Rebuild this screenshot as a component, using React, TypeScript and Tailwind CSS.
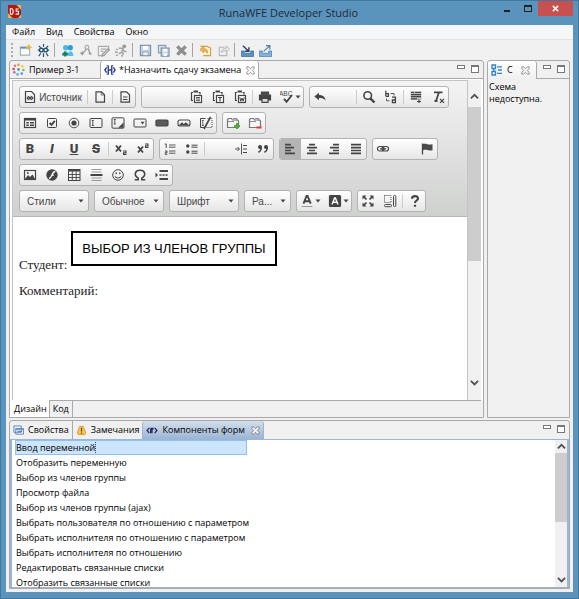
import type { ReactNode } from "react";
import clsx from "clsx";

interface IconProps {
  children: ReactNode;
  className?: string;
}

function Icon({ children, className = "h-[14px] w-[14px]" }: IconProps) {
  return (
    <svg viewBox="0 0 14 14" fill="none" stroke="#444" strokeWidth="1.2" className={clsx("shrink-0", className)} aria-hidden="true">
      {children}
    </svg>
  );
}

const clipboard = (
  <>
    <path d="M4 2.5H2.5v8H4M9.5 2.5H11v2" />
    <path d="M4.5 1.5h4.5" strokeWidth="2" />
    <rect x="5.5" y="5.5" width="7" height="7" fill="#fff" />
  </>
);

const icons: Record<string, ReactNode> = {
  source: (
    <Icon>
      <path d="M2.5 1.5h6l3 3v8h-9z" />
      <path d="M5.8 6.2 4.2 8l1.6 1.8M8.2 6.2 9.8 8 8.2 9.8" />
      <circle cx="7" cy="8" r=".9" />
    </Icon>
  ),
  page: (
    <Icon>
      <path d="M3 1.8h5.5l3 3v7.4H3z" />
      <path d="M8.2 2v3h3" strokeWidth=".7" />
    </Icon>
  ),
  preview: (
    <Icon>
      <path d="M3 1.8h5.5l3 3v7.4H3z" />
      <path d="M5 7h4.5M5 9.5h4.5" />
    </Icon>
  ),
  paste: (
    <Icon>
      {clipboard}
      <path d="M7 7.5h4M7 9h4M7 10.6h4" strokeWidth=".9" />
    </Icon>
  ),
  pasteText: (
    <Icon>
      {clipboard}
      <path d="M7 7.5h4M9 7.5v4" />
    </Icon>
  ),
  pasteWord: (
    <Icon>
      {clipboard}
      <path d="m6.8 7.3 1 4L9 8l1.2 3.3 1-4" strokeWidth="1" />
    </Icon>
  ),
  print: (
    <Icon>
      <path d="M3.5 2.2h7v2h-7z" fill="#444" />
      <path d="M1.5 5h11v5h-11z" fill="#444" />
      <path d="M4 8.5h6v3.8H4z" fill="#ddd" />
    </Icon>
  ),
  spell: (
    <Icon>
      <text x="-1" y="6" fontSize="6.5" fontFamily="Liberation Sans, sans-serif" fill="#444" stroke="none">ABC</text>
      <path d="m4 8.8 2.6 3L12 5" strokeWidth="1.9" />
    </Icon>
  ),
  undo: (
    <Icon>
      <path d="M1.3 6.5 6 2.7v2.400c4 .1 6.200 1.800 6.600 5.600C11 8.500 9.400 8 6 8v2.300z" fill="#444" stroke="none" />
    </Icon>
  ),
  find: (
    <Icon>
      <circle cx="5.700" cy="5.500" r="3.800" strokeWidth="1.600" />
      <path d="m8.300 8.300 4.200 4.200" strokeWidth="2.400" />
    </Icon>
  ),
  replace: (
    <Icon>
      <path d="M1.800.8v5.500M1.800 3.600h2.600v2.700H1.800M8 7.200h3.400v5.500H8.400V10H11" strokeWidth="1.300" />
      <path d="M6.500 3.500H10v2M5.500 10.800H2.500V8.500" strokeWidth=".9" />
    </Icon>
  ),
  selectAll: (
    <Icon>
      <path d="M1.500 1h11v9h-11z" fill="#c0c0c0" stroke="none" />
      <path d="M2 2.500h3M6 2.500h6M2 4.600h10M2 6.700h10M2 8.800h6M8 11.500h4M10 9.500v3.500" />
    </Icon>
  ),
  removeFormat: (
    <Icon>
      <path d="M3 2.300h8.500M8 2.300 5 11M3.500 11h3" strokeWidth="1.800" />
      <path d="m9 8.800 4 4M13 8.800l-4 4" strokeWidth="1.200" />
    </Icon>
  ),
  form: (
    <Icon>
      <rect x="1.500" y="2.500" width="11" height="9" />
      <path d="M1.500 3.500h11" strokeWidth="2.200" />
      <path d="M3.300 6.800h2.500M7 6.800h4M3.300 9.300h2.500M7 9.300h4" strokeWidth="1.400" />
    </Icon>
  ),
  checkbox: (
    <Icon>
      <rect x="2.500" y="2.500" width="9" height="9" rx="1" strokeWidth="1" />
      <path d="m4.600 6.800 1.900 2 3.300-4" strokeWidth="1.900" />
    </Icon>
  ),
  radio: (
    <Icon>
      <circle cx="7" cy="7" r="4.800" strokeWidth=".9" />
      <circle cx="7" cy="7" r="2.600" fill="#444" stroke="none" />
    </Icon>
  ),
  textField: (
    <Icon>
      <rect x="1" y="2.500" width="12" height="9" rx="1" strokeWidth="1" />
      <path d="M2.800 4.500h2M3.800 4.500v5M2.800 9.500h2" strokeWidth=".9" />
    </Icon>
  ),
  textArea: (
    <Icon>
      <rect x="1" y="1.800" width="12" height="10.400" rx="1" strokeWidth="1" />
      <path d="M2.800 3.500h2M3.800 3.500V8M2.800 8h2" strokeWidth=".9" />
      <path d="M12.500 6.500v5.300H7.200z" fill="#444" stroke="none" />
    </Icon>
  ),
  select: (
    <Icon>
      <rect x="1" y="3" width="12" height="8" rx="1" strokeWidth="1" />
      <path d="M7.500 5.800h4L9.500 8.500z" fill="#444" stroke="none" />
    </Icon>
  ),
  button: (
    <Icon>
      <rect x="1" y="4" width="12" height="6" rx="1.200" fill="#5a5a5a" />
    </Icon>
  ),
  imageButton: (
    <Icon>
      <rect x="1" y="4" width="12" height="6" rx="2" strokeWidth="1.100" />
      <path d="m3 9 2-2L6.800 9l2-2L11 9z" fill="#444" />
    </Icon>
  ),
  hidden: (
    <Icon>
      <path d="M6.500 2.500H1.500v9h4" strokeWidth="1" />
      <path d="M2.800 4.500h2M3.800 4.500v5M2.800 9.500h2" strokeWidth=".8" />
      <path d="M8.500 2.500h4.500v9H7" strokeDasharray="1 1" strokeWidth="1" />
      <path d="M11.500 1 5 13" strokeWidth="1.600" />
    </Icon>
  ),
  folderAdd: (
    <Icon>
      <path d="M1.500 11.500v-8l1-1h3l1 1.500h5l1 1v6.500z" fill="#f5f5f5" stroke="#777" />
      <path d="M7 2.500h4v2M2 5.500h6" stroke="#777" strokeWidth=".8" />
      <path d="M8 10h6M11 7v6" stroke="#4fae2f" strokeWidth="2.200" />
    </Icon>
  ),
  folderRemove: (
    <Icon>
      <path d="M1.500 11.500v-8l1-1h3l1 1.500h5l1 1v6.500z" fill="#f5f5f5" stroke="#777" />
      <path d="M7 2.500h4v2M2 5.500h6" stroke="#777" strokeWidth=".8" />
      <path d="M8.500 11.500h5" stroke="#dc3b3b" strokeWidth="2.200" />
    </Icon>
  ),
  sub: (
    <Icon>
      <path d="m2 3.500 5 6M7 3.500l-5 6" strokeWidth="1.900" />
      <path d="M9 9h3v1.700H9.500v1.700h3" strokeWidth="1.100" />
    </Icon>
  ),
  sup: (
    <Icon>
      <path d="m2 4.500 5 6M7 4.500l-5 6" strokeWidth="1.900" />
      <path d="M9 2h3v1.700H9.500v1.700h3" strokeWidth="1.100" />
    </Icon>
  ),
  ordered: (
    <Icon>
      <path d="M1.800 2h1.400v4M2 9h2v1.700H2.300v1.600h2" strokeWidth="1" />
      <path d="M6 3h6.500M6 5.200h6.500M6 9h6.500M6 11.200h6.500" strokeWidth=".9" />
    </Icon>
  ),
  bulleted: (
    <Icon>
      <circle cx="2.800" cy="4" r="1.700" fill="#444" stroke="none" />
      <circle cx="2.800" cy="10" r="1.700" fill="#444" stroke="none" />
      <path d="M6.500 3.200h6M6.500 5.200h6M6.500 9.200h6M6.500 11.200h6" strokeWidth="1" />
    </Icon>
  ),
  div: (
    <Icon>
      <path d="M1 7h4M3.500 5 5.500 7l-2 2M7.500 1.500v11" strokeWidth=".9" />
      <path d="M9 3.500h4M9 7h4M9 10.500h4" strokeWidth="1.200" />
    </Icon>
  ),
  quote: (
    <Icon>
      <circle cx="4" cy="5" r="2" fill="#444" stroke="none" />
      <circle cx="10" cy="5" r="2" fill="#444" stroke="none" />
      <path d="M5.300 5c0 3-1 4.500-3 5.300M11.300 5c0 3-1 4.500-3 5.300" strokeWidth="1.500" />
    </Icon>
  ),
  left: (
    <Icon>
      <path d="M2 2.700h6M2 5.600h9M2 8.500h6M2 11.400h10" strokeWidth="1.700" />
    </Icon>
  ),
  center: (
    <Icon>
      <path d="M4 2.700h6M2 5.600h10M4 8.500h6M2 11.400h10" strokeWidth="1.700" />
    </Icon>
  ),
  right: (
    <Icon>
      <path d="M6 2.700h6M3 5.600h9M6 8.500h6M2 11.400h10" strokeWidth="1.700" />
    </Icon>
  ),
  justify: (
    <Icon>
      <path d="M2 2.700h10M2 5.600h10M2 8.500h10M2 11.400h10" strokeWidth="1.700" />
    </Icon>
  ),
  link: (
    <Icon>
      <rect x="1.500" y="4.500" width="6.500" height="4.500" rx="2.200" />
      <rect x="6" y="4.500" width="6.500" height="4.500" rx="2.200" />
      <path d="M4 6.800h6" />
    </Icon>
  ),
  flag: (
    <Icon>
      <path d="M2.500 1.500v11" strokeWidth="1.300" />
      <path d="M3 2c3-1.200 4.500 1.200 9.500.2v6C8 9.500 6.500 7 3 8.200z" fill="#4a4a4a" stroke="none" />
    </Icon>
  ),
  image: (
    <Icon>
      <rect x="1.500" y="2.500" width="11" height="9" />
      <path d="m2 11 3-4 2 2 2.500-2.500L12 11z" fill="#444" stroke="none" />
      <circle cx="4.800" cy="5" r="1" fill="#444" stroke="none" />
    </Icon>
  ),
  flash: (
    <Icon>
      <circle cx="7" cy="7" r="5.700" fill="#444" stroke="none" />
      <path d="M10.300 3.500C6.500 3.500 7.500 10 4 10.500M6.300 7.200h2.500" stroke="#fff" strokeWidth="1.300" />
    </Icon>
  ),
  table: (
    <Icon>
      <rect x="1.500" y="1.500" width="11.500" height="11" strokeWidth="1" />
      <path d="M1.500 2.500h11.500" strokeWidth="2.200" />
      <path d="M1.500 6.500H13M1.500 9.500H13M5.300 3v9.500M9.200 3v9.500" strokeWidth=".9" />
    </Icon>
  ),
  rule: (
    <Icon>
      <path d="M2.500 1.500h10M2.500 4h10M2.500 10h10M2.500 12.500h10" stroke="#999" strokeWidth="1.100" />
      <path d="M1.500 7h12" strokeWidth="1.900" />
    </Icon>
  ),
  smiley: (
    <Icon>
      <circle cx="7" cy="7" r="5.300" strokeWidth="1" />
      <path d="M4 8.500c1.500 2 4.500 2 6 0M5.200 4.300v2M8.800 4.300v2" />
    </Icon>
  ),
  omega: (
    <Icon>
      <path d="M1.700 11.700h3.500v-1.500C.2 7 2.200 2.300 7 2.300s6.800 4.700 1.800 7.900v1.500h3.500" strokeWidth="1.600" />
    </Icon>
  ),
  pageBreak: (
    <Icon>
      <path d="M.5 4.500v5L3 7z" fill="#444" stroke="none" />
      <path d="M4.500 3h8.500M4.500 11h8.500" strokeWidth="2" />
      <path d="M4.500 7h8.500" strokeDasharray="2 1" strokeWidth="1.500" />
    </Icon>
  ),
  textColor: (
    <Icon>
      <path d="M3.500 9.700 6.600 2h1l3.100 7.700M4.700 7.200h5" strokeWidth="1.900" />
      <path d="M1.500 12.500h11" stroke="#999" strokeWidth="1" />
    </Icon>
  ),
  bgColor: (
    <Icon>
      <rect x="1.500" y="1.500" width="11" height="11" rx="1" fill="#444" />
      <path d="M4 10.500 6.600 4h.8l2.600 6.500M5 8.200h4" stroke="#fff" strokeWidth="1.400" />
    </Icon>
  ),
  maximize: (
    <Icon>
      <path d="m2.500 2.500 3 3M11.500 2.500l-3 3M2.500 11.500l3-3M11.500 11.500l-3-3" strokeWidth="1.700" />
      <path d="M1.500 5.500v-4h4zM12.500 5.500v-4h-4zM1.500 8.500v4h4zM12.500 8.500v4h-4z" fill="#444" stroke="none" />
    </Icon>
  ),
  blocks: (
    <Icon>
      <path d="M1.500 1.500h6.500v7H1.500z" strokeDasharray="1 1" strokeWidth="1" />
      <rect x="10.500" y="1.500" width="2.300" height="11" rx="1" strokeWidth="1" />
      <rect x="1.500" y="10.500" width="7" height="2.200" rx="1" strokeWidth="1" />
    </Icon>
  ),
  about: (
    <Icon>
      <path d="M4 4.700C4 1.300 10 1.300 10 4.500 10 6.500 7 6.500 7 9" strokeWidth="2.100" />
      <path d="M7 10.700v2" strokeWidth="2.200" />
    </Icon>
  ),
};

const mainTools: { label: string; art: ReactNode; first?: boolean }[] = [
  {
    label: "Создать",
    art: (
      <>
        <path d="M1.500 3.500h10v8.500h-10z" fill="#fdfdf4" stroke="#9fb0c4" />
        <path d="M1.500 4h8" stroke="#5c8cc4" strokeWidth="2" />
        <path d="M10.500.5v6M7.500 3.500h6" stroke="#e0b544" strokeWidth="1.800" />
      </>
    ),
  },
  {
    label: "Бот",
    art: (
      <>
        <path d="M7 0v3M1 7l2-1M13 7l-2-1M4 10l-2 3M10 10l2 3M7 10v4M2 2l2 2M12 2l-2 2" stroke="#27506f" strokeWidth="1.300" />
        <circle cx="4.700" cy="6.500" r="2" fill="#fff" stroke="#27506f" strokeWidth="1.500" />
        <circle cx="9.300" cy="6.500" r="2" fill="#fff" stroke="#27506f" strokeWidth="1.500" />
      </>
    ),
  },
  {
    label: "Роли",
    first: true,
    art: (
      <>
        <circle cx="5" cy="4" r="2.800" fill="#4cb5e6" stroke="none" />
        <circle cx="10" cy="4" r="2.800" fill="#2d9bd3" stroke="none" />
        <path d="M1 13c0-7 7-7 8 0zM7 13c0-7 6-7 6.500 0z" fill="#55bdec" stroke="none" />
        <path d="M4.500 8v5.500M1.800 10.800h5.500" stroke="#257c32" strokeWidth="2" />
      </>
    ),
  },
  {
    label: "Узел",
    art: (
      <>
        <circle cx="8.500" cy="3.500" r="2" stroke="#aaa" />
        <path d="M8 5.500 5 9M10 5.500l2 4.500M3.500 8v4M1.500 10h4M10.500 10.500h3" stroke="#999" strokeWidth="1.500" />
      </>
    ),
  },
  {
    label: "Форма",
    art: (
      <>
        <path d="M1.500 2.500h11v4M1.500 2.500v10h7M4 5.500h6M4 8h3" stroke="#aaa" />
        <path d="m6 11 6-6 1.500 1.500-6 6L5 13z" fill="#d4d4d4" stroke="#999" />
      </>
    ),
  },
  {
    label: "Запуск",
    art: (
      <>
        <circle cx="10" cy="2.500" r="2" fill="#999" stroke="none" />
        <path d="M4 4.500h4.500l1 3 3 1M8.500 5 7 9l2 1-2 3.500M7 9l-3 1.500M1 6h2M0 9h3M1 12h2" stroke="#a3a3a3" strokeWidth="1.600" />
      </>
    ),
  },
  {
    label: "Сохранить",
    first: true,
    art: (
      <>
        <path d="M1.500 1.500h11v11h-11z" fill="#c5d3e2" stroke="#7890ab" />
        <path d="M4 2h6v4H4z" fill="#fff" stroke="none" />
        <path d="M4 8.500h6v4H4z" fill="#edf1f5" stroke="#7890ab" strokeWidth=".8" />
      </>
    ),
  },
  {
    label: "Сохранить все",
    art: (
      <>
        <path d="M1.500 1.500h8v8h-8z" fill="#d8e1eb" stroke="#8a9db3" />
        <path d="M4.500 4.500h8.500V13H4.500z" fill="#c5d3e2" stroke="#7890ab" />
        <path d="M6.500 5h4.500v3H6.500zM7 10h3.500v3H7z" fill="#fff" stroke="none" />
      </>
    ),
  },
  { label: "Удалить", art: <path d="m2.500 2.500 9 9M11.500 2.500l-9 9" stroke="#8d8d8d" strokeWidth="3.600" /> },
  {
    label: "Импорт",
    first: true,
    art: (
      <>
        <path d="M1.500 2.500h7l4 2v8h-8" fill="#fbf2d8" stroke="#d2a03c" />
        <path d="m1 6 4-3v2c3 0 5 1.500 4 5-1-2-2-2.500-4-2.500v2z" fill="#efba4b" stroke="#c38b2a" strokeWidth=".7" />
      </>
    ),
  },
  {
    label: "Экспорт",
    art: (
      <>
        <path d="M8 3.500H2.500v9h8V9" stroke="#b5b5b5" />
        <path d="M5 9c0-3 2-4.500 5-4.500V2l3.500 3.500L10 9V7C8 7 6.500 7.500 5 9z" fill="#ededed" stroke="#a5a5a5" strokeWidth=".8" />
      </>
    ),
  },
  {
    label: "Загрузить",
    first: true,
    art: (
      <>
        <path d="M.5 7.500v6h13v-6H10.500v2.500h-7V7.500z" fill="#5f91bf" stroke="#3b6b9c" strokeWidth=".8" />
        <path d="m2 2 6 5.500M8.500 3.500v4.300H4.300" stroke="#28406a" strokeWidth="1.500" />
      </>
    ),
  },
  {
    label: "Выгрузить",
    art: (
      <>
        <path d="M.5 7.500v6h13v-6H10.500v2.500h-7V7.500z" fill="#83b2dc" stroke="#4a7dae" strokeWidth=".8" />
        <path d="m5 8 6.500-6M7.500 1.800h4.200V6" stroke="#4a7dae" strokeWidth="1.300" />
      </>
    ),
  },
];

function Group({ children }: { children: ReactNode }) {
  return (
    <div className="flex h-[22px] shrink-0 items-stretch overflow-hidden rounded-[3px] border border-[#b3b3b3] bg-linear-to-b from-white to-[#e6e6e6]">
      <div className="-mx-px flex items-stretch">{children}</div>
    </div>
  );
}

function Sep() {
  return <span className="mx-px my-[3px] w-px bg-[#cccccc]" />;
}

interface ToolProps {
  name: string;
  label: string;
  caption?: string;
  menu?: boolean;
  active?: boolean;
}

function Tool({ name, label, caption, menu, active }: ToolProps) {
  return (
    <button
      type="button"
      aria-label={label}
      className={clsx(
        "flex items-center justify-center",
        caption ? "w-[67px] gap-[2px]" : menu ? "w-[28px] gap-px" : "w-[22px]",
        active && "bg-[#b5b5b5]"
      )}
    >
      {icons[name]}
      {caption && <span className="font-['Liberation_Sans',sans-serif] text-[10px] text-[#484848]">{caption}</span>}
      {menu && <Arrow />}
    </button>
  );
}

function Arrow() {
  return (
    <svg viewBox="0 0 6 4" className="h-[4px] w-[6px] shrink-0" aria-hidden="true">
      <path d="M.5.5h5L3 3.500z" fill="#444" />
    </svg>
  );
}

function Letter({ label, children, className }: { label: string; children: string; className?: string }) {
  return (
    <button type="button" aria-label={label} className={clsx("w-[22px] font-['Roboto',sans-serif] text-[13px] leading-[20px] font-black text-[#444]", className)}>
      {children}
    </button>
  );
}

function Combo({ label, value, small }: { label: string; value: string; small?: boolean }) {
  return (
    <div className="flex h-[22px] items-center rounded-[3px] border border-[#b3b3b3] bg-linear-to-b from-white to-[#e6e6e6] pr-[4px]">
      <select
        aria-label={label}
        className={clsx("appearance-none bg-transparent pl-[7px] font-['Liberation_Sans',sans-serif] text-[10px] text-[#484848]", small ? "w-[35px]" : "w-[58px]")}
      >
        <option>{value}</option>
      </select>
      <Arrow />
    </div>
  );
}

function CloseIcon({ light }: { light?: boolean }) {
  return (
    <svg viewBox="0 0 10 10" className="h-[9px] w-[9px]" fill={light ? "#eef3f9" : "none"} stroke="#7a7a7a" strokeWidth=".9" aria-hidden="true">
      <path d="M1 1h2l2 2 2-2h2v2L7 5l2 2v2H7L5 7 3 9H1V7l2-2-2-2z" />
    </svg>
  );
}

function PaneButtons() {
  return (
    <div className="flex items-start gap-[6px] pt-[4px] pr-[4px]">
      <button type="button" aria-label="Свернуть" className="h-[4px] w-[8px] border border-[#777] bg-white" />
      <button type="button" aria-label="Развернуть" className="h-[8px] w-[8px] border border-t-2 border-[#777] bg-white" />
    </div>
  );
}

function Chevron({ up }: { up?: boolean }) {
  return (
    <svg viewBox="0 0 10 7" className="w-[9px]" fill="none" stroke="#505050" strokeWidth="2" aria-hidden="true">
      <path d={up ? "m1 6 4-4 4 4" : "m1 1 4 4 4-4"} />
    </svg>
  );
}

const components = [
  "Ввод переменной",
  "Отобразить переменную",
  "Выбор из членов группы",
  "Просмотр файла",
  "Выбор из членов группы (ajax)",
  "Выбрать пользователя по отношению с параметром",
  "Выбрать исполнителя по отношению с параметром",
  "Выбрать исполнителя по отношению",
  "Редактировать связанные списки",
  "Отобразить связанные списки",
];

function TitleBar() {
  return (
    <header className="flex h-[24px] shrink-0 items-start">
      <svg viewBox="0 0 14 14" className="mt-[4px] ml-[2px] h-[13px] w-[13px]" aria-hidden="true">
        <path d="M0 0h14v14H0z" fill="#b5160f" />
        <path d="M9 0h5v5M0 9v5h5M11 14h3v-4" fill="#e8b64a" />
        <path d="M2.500 4v6h1.500c2 0 2-6 0-6zM11.500 4.300H8.800v2.500h2.500v3H8.200" fill="none" stroke="#fff" strokeWidth="1.200" />
      </svg>
      <h1 className="flex-1 pt-[3px] pl-[60px] text-center text-[11px] leading-[17px] text-[#1e2b36]">RunaWFE Developer Studio</h1>
      <button type="button" aria-label="Свернуть окно" className="flex h-[15px] w-[21px] items-end justify-center pb-[4px]">
        <span className="h-[2px] w-[6px] bg-[#222]" />
      </button>
      <button type="button" aria-label="Развернуть окно" className="flex h-[15px] w-[21px] items-center justify-center">
        <span className="h-[7px] w-[8px] border border-t-2 border-[#222]" />
      </button>
      <button type="button" aria-label="Закрыть окно" className="flex h-[15px] w-[35px] items-center justify-center bg-[#c75050]">
        <svg viewBox="0 0 8 8" className="h-[7px] w-[7px]" stroke="#fff" strokeWidth="1.700" aria-hidden="true">
          <path d="m1 1 6 6M7 1 1 7" />
        </svg>
      </button>
    </header>
  );
}

function EditorToolbar() {
  return (
    <div className="flex flex-col gap-[4px] border-b border-[#b6b6b6] bg-linear-to-b from-[#f3f3f3] to-[#cfd1cf] pt-[5px] pb-[4px] pl-[6px]">
      <div className="flex gap-[5px]">
        <Group>
          <Tool name="source" label="Источник" caption="Источник" />
          <Sep />
          <Tool name="page" label="Новая страница" />
          <Sep />
          <Tool name="preview" label="Предварительный просмотр" />
        </Group>
        <Group>
          <span className="w-[44px]" />
          <Tool name="paste" label="Вставить" />
          <Tool name="pasteText" label="Вставить только текст" />
          <Tool name="pasteWord" label="Вставить из Word" />
          <Sep />
          <Tool name="print" label="Печать" />
          <Tool name="spell" label="Проверка орфографии" menu />
        </Group>
        <Group>
          <Tool name="undo" label="Отменить" />
          <span className="w-[24px]" />
          <Sep />
          <Tool name="find" label="Найти" />
          <Tool name="replace" label="Заменить" />
          <Sep />
          <Tool name="selectAll" label="Выделить все" />
          <Tool name="removeFormat" label="Убрать форматирование" />
        </Group>
      </div>
      <div className="flex gap-[5px]">
        <Group>
          <Tool name="form" label="Форма" />
          <Tool name="checkbox" label="Флажок" />
          <Tool name="radio" label="Переключатель" />
          <Tool name="textField" label="Текстовое поле" />
          <Tool name="textArea" label="Многострочное поле" />
          <Tool name="select" label="Выпадающий список" />
          <Tool name="button" label="Кнопка" />
          <Tool name="imageButton" label="Кнопка-изображение" />
          <Tool name="hidden" label="Скрытое поле" />
        </Group>
        <Group>
          <Tool name="folderAdd" label="Добавить компонент" />
          <Tool name="folderRemove" label="Удалить компонент" />
        </Group>
      </div>
      <div className="flex gap-[5px]">
        <Group>
          <Letter label="Полужирный">B</Letter>
          <Letter label="Курсив" className="font-['Liberation_Mono',monospace] italic">I</Letter>
          <Letter label="Подчеркнутый" className="underline">U</Letter>
          <Letter label="Зачеркнутый" className="line-through">S</Letter>
          <Sep />
          <Tool name="sub" label="Подстрочный" />
          <Tool name="sup" label="Надстрочный" />
        </Group>
        <Group>
          <Tool name="ordered" label="Нумерованный список" />
          <Tool name="bulleted" label="Маркированный список" />
          <Sep />
          <span className="w-[24px]" />
          <Tool name="div" label="Контейнер" />
          <Tool name="quote" label="Цитата" />
        </Group>
        <Group>
          <Tool name="left" label="По левому краю" active />
          <Tool name="center" label="По центру" />
          <Tool name="right" label="По правому краю" />
          <Tool name="justify" label="По ширине" />
        </Group>
        <Group>
          <Tool name="link" label="Ссылка" />
          <span className="w-[22px]" />
          <Tool name="flag" label="Якорь" />
        </Group>
      </div>
      <div className="flex">
        <Group>
          <Tool name="image" label="Изображение" />
          <Tool name="flash" label="Flash" />
          <Tool name="table" label="Таблица" />
          <Tool name="rule" label="Горизонтальная линия" />
          <Tool name="smiley" label="Смайлы" />
          <Tool name="omega" label="Специальный символ" />
          <Tool name="pageBreak" label="Разрыв страницы" />
        </Group>
      </div>
      <div className="flex gap-[5px]">
        <Combo label="Стили" value="Стили" />
        <Combo label="Форматирование" value="Обычное" />
        <Combo label="Шрифт" value="Шрифт" />
        <Combo label="Размер" value="Ра..." small />
        <Group>
          <Tool name="textColor" label="Цвет текста" menu />
          <Tool name="bgColor" label="Цвет фона" menu />
        </Group>
        <Group>
          <Tool name="maximize" label="Развернуть редактор" />
          <Tool name="blocks" label="Отображать блоки" />
          <Sep />
          <Tool name="about" label="О редакторе" />
        </Group>
      </div>
    </div>
  );
}

function EditorPane() {
  return (
    <section className="flex min-w-0 flex-1 flex-col rounded-t-[3px] border border-[#a9a9a9] bg-[#f0f0f0]">
      <div className="flex h-[18px] shrink-0 border-b border-[#a9a9a9]">
        <div role="tablist" className="flex flex-1">
          <button type="button" role="tab" aria-selected="false" className="flex w-[90px] items-center gap-[4px] pl-[2px]">
            <svg viewBox="0 0 14 14" className="h-[13px] w-[13px]" aria-hidden="true">
              <circle cx="7" cy="7" r="1.600" fill="#4a9be0" />
              <circle cx="7" cy="2" r="1.400" fill="#f09a2e" />
              <circle cx="11" cy="3.500" r="1.400" fill="#f3c93a" />
              <circle cx="12.300" cy="7.500" r="1.400" fill="#7fc04d" />
              <circle cx="10.500" cy="11.300" r="1.400" fill="#4a9be0" />
              <circle cx="6" cy="12.300" r="1.400" fill="#5ab6d8" />
              <circle cx="2.500" cy="10" r="1.400" fill="#b062c7" />
              <circle cx="1.700" cy="6.500" r="1.400" fill="#e0474c" />
              <circle cx="3.200" cy="3" r="1.400" fill="#e86f8a" />
            </svg>
            Пример 3-1
          </button>
          <button type="button" role="tab" aria-selected="true" className="-mb-px flex items-center gap-[3px] rounded-t-[3px] border-x border-[#a9a9a9] bg-white px-[3px]">
            <svg viewBox="0 0 14 14" className="h-[12px] w-[12px]" fill="none" stroke="#2e3c9c" strokeWidth="1.600" aria-hidden="true">
              <path d="M3.200 4 1 7l2.200 3M10.800 4 13 7l-2.200 3M5 2v10M9 2v10M5 7h4" />
              <path d="M3 2h2.500M3 12h2.500M8.500 2H11M8.500 12H11" strokeWidth="1" />
            </svg>
            *Назначить сдачу экзамена
            <span className="pl-[2px]"><CloseIcon /></span>
          </button>
        </div>
        <PaneButtons />
      </div>
      <div className="flex min-h-0 flex-1 border-x-2 border-t border-white">
        <div className="flex min-w-0 flex-1 flex-col overflow-hidden border-t border-l border-[#c4c4c4] bg-white">
          <EditorToolbar />
          <article className="px-[6px] pt-[14px] font-['Liberation_Serif',serif] text-[13px] leading-[17px] text-[#222]">
            <p className="flex items-end gap-[4px]">
              <span className="-mb-[7px]">Студент:</span>
              <span className="border-2 border-black px-[9px] py-[7px] font-['Liberation_Sans',sans-serif] text-black">ВЫБОР ИЗ ЧЛЕНОВ ГРУППЫ</span>
            </p>
            <p className="mt-[16px]">Комментарий:</p>
          </article>
        </div>
        <div className="flex w-[14px] shrink-0 flex-col items-center border-l border-[#c4c4c4] bg-[#f0f0f0]">
          <div className="flex h-[27px] items-center pt-[6px]"><Chevron up /></div>
          <div className="w-full flex-1"><div className="h-[58%] w-full bg-[#cdcdcd]" /></div>
          <div className="flex h-[27px] items-center pb-[6px]"><Chevron /></div>
        </div>
      </div>
      <div role="tablist" className="mr-[2px] flex h-[17px] shrink-0 border-t border-[#a9a9a9]">
        <button type="button" role="tab" aria-selected="true" className="-mt-px border-r border-[#a9a9a9] bg-white pr-[2px] pl-[4px]">Дизайн</button>
        <button type="button" role="tab" aria-selected="false" className="border-r border-[#a9a9a9] px-[3px]">Код</button>
      </div>
    </section>
  );
}

function OutlinePane() {
  return (
    <aside className="flex w-[83px] shrink-0 flex-col rounded-t-[3px] border border-[#a9a9a9] bg-[#f0f0f0]">
      <div className="flex h-[18px] shrink-0 justify-between border-b border-[#a9a9a9]">
        <button type="button" className="-mb-px flex w-[49px] items-center gap-[4px] rounded-t-[3px] border-r border-[#a9a9a9] bg-linear-to-b from-white to-[#f0f0f0] pl-[3px]">
          <svg viewBox="0 0 12 12" className="h-[12px] w-[12px]" fill="none" stroke="#2f83c3" strokeWidth="1.300" aria-hidden="true">
            <path d="M1 1h3.500v3.500H1zM1 7.500h3.500V11H1zM2.700 4.500v3M6 2.800h5M7 6h4M6 9.300h5" />
          </svg>
          С
          <span className="pl-[4px]"><CloseIcon /></span>
        </button>
        <PaneButtons />
      </div>
      <p className="px-px pt-[2px] leading-[12px]">Схема недоступна.</p>
    </aside>
  );
}

function ComponentsPane() {
  return (
    <section className="flex h-[169px] shrink-0 flex-col rounded-t-[3px] border border-[#a9a9a9] bg-[#f0f0f0]">
      <div className="flex h-[18px] shrink-0">
        <div role="tablist" className="flex flex-1">
          <button type="button" role="tab" aria-selected="false" className="flex items-center gap-[4px] border-r border-[#a9a9a9] px-[3px]">
            <svg viewBox="0 0 12 12" className="h-[11px] w-[11px]" fill="#e9f2fa" stroke="#5d86b3" aria-hidden="true">
              <path d="M1 1h8v7H1zM3 4h8.500v6H3z" />
              <path d="M3 4.500h8.500M5 7h5" strokeWidth="1.400" />
            </svg>
            Свойства
          </button>
          <button type="button" role="tab" aria-selected="false" className="flex items-center gap-[4px] px-[3px]">
            <svg viewBox="0 0 12 12" className="h-[11px] w-[11px]" aria-hidden="true">
              <path d="M4 1.500h4l2.500 7-1 2h-7l-1-2z" fill="#f7c551" stroke="#cf8b24" strokeWidth=".8" />
              <path d="M6 3v4M6 8.200v1.300" stroke="#6b4310" strokeWidth="1.300" />
            </svg>
            Замечания
          </button>
          <button type="button" role="tab" aria-selected="true" className="flex items-center gap-[4px] rounded-t-[3px] border-x border-[#a3b4c8] bg-linear-to-b from-[#d3dfec] to-[#9cb5d4] px-[3px]">
            <svg viewBox="0 0 13 10" className="h-[9px] w-[12px]" fill="none" stroke="#26265c" strokeWidth="1.400" aria-hidden="true">
              <path d="M3.500 2 1 5l2.500 3M9.500 2 12 5 9.500 8M5 8V4c0-2 3-2 3 0M6.500 2v6" />
            </svg>
            Компоненты форм
            <span className="pl-[2px]"><CloseIcon light /></span>
          </button>
        </div>
        <PaneButtons />
      </div>
      <div className="flex min-h-0 flex-1 border-x-2 border-y border-[#9cb5d4] bg-white">
        <ul role="listbox" aria-label="Компоненты форм" className="min-w-0 flex-1 pl-[3px] leading-[15px]">
          {components.map((item, i) => (
            <li key={item} role="option" aria-selected={i === 0} className={clsx("flex w-[232px] whitespace-nowrap", i === 0 && "bg-[#cce4fc] outline outline-[#90c0f0] -outline-offset-1")}>
              <span className={clsx("px-px", i === 0 && "outline-1 outline-dotted outline-[#444] -outline-offset-1")}>{item}</span>
            </li>
          ))}
        </ul>
        <div className="flex w-[12px] shrink-0 flex-col items-center bg-[#f0f0f0]">
          <div className="flex h-[13px] items-center px-[3px]"><Chevron up /></div>
          <div className="w-full flex-1"><div className="h-[57%] w-full bg-[#cdcdcd]" /></div>
          <div className="flex h-[13px] items-center px-[3px]"><Chevron /></div>
        </div>
      </div>
    </section>
  );
}

export default function App() {
  return (
    <div className="flex h-screen flex-col border border-[#4178a0] bg-[#5a94bd] px-[5px] pb-[6px] font-['Open_Sans',sans-serif] text-[9px] text-black">
      <TitleBar />
      <div className="flex min-h-0 flex-1 flex-col bg-[#f0f0f0]">
        <nav className="flex h-[14px] shrink-0 items-center gap-[11px] bg-[#f5f6f7] pl-[6px]">
          {["Файл", "Вид", "Свойства", "Окно"].map((item) => (
            <button key={item} type="button">{item}</button>
          ))}
        </nav>
        <div role="toolbar" aria-label="Главная панель" className="flex h-[21px] shrink-0 items-center border-t border-[#e3e3e3] pl-[5px]">
          <span className="mr-[3px] h-[14px] border-l-2 border-dotted border-[#aaa]" />
          {mainTools.map((tool) => (
            <div key={tool.label} className="flex items-center">
              {tool.first && <span className="mr-[3px] ml-[2px] h-[14px] w-px bg-[#a5a5a5]" />}
              <button type="button" aria-label={tool.label} className="flex w-[18px] justify-center">
                <Icon className="h-[13px] w-[13px]">{tool.art}</Icon>
              </button>
            </div>
          ))}
        </div>
        <main className="flex min-h-0 flex-1 flex-col gap-[2px] px-[3px] pb-[3px]">
          <div className="flex min-h-0 flex-1 gap-[3px]">
            <EditorPane />
            <OutlinePane />
          </div>
          <ComponentsPane />
        </main>
      </div>
    </div>
  );
}
